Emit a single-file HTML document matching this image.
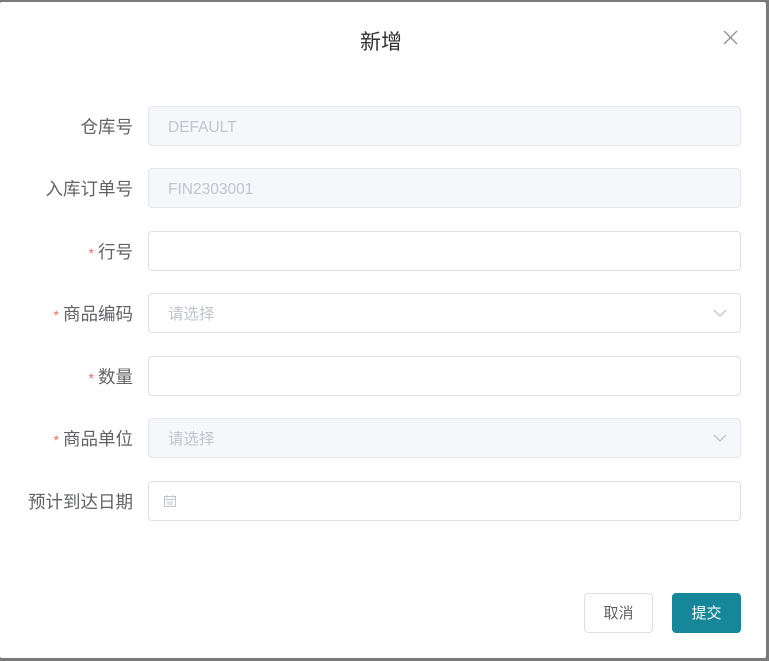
<!DOCTYPE html>
<html><head><meta charset="utf-8"><style>
*{box-sizing:border-box;margin:0;padding:0}
body{width:769px;height:661px;background:#7a7a7a;position:relative;overflow:hidden;font-family:"Liberation Sans","Noto Sans CJK SC",sans-serif}
.dlg{position:absolute;left:0;top:2px;width:766px;height:656px;background:#fff;border-radius:2px}
.title{position:absolute;top:24px;left:-2px;width:766px;text-align:center;font-size:21px;color:#303133}
.close{position:absolute;left:723px;top:28px}
.lab{position:absolute;right:636px;font-size:17.5px;color:#606266;line-height:40px;white-space:nowrap}
.lab i{color:#f56c6c;font-style:normal;margin-right:4px;font-size:14px}
.inp{position:absolute;left:148px;width:593px;height:40px;border:1px solid #dcdfe6;border-radius:4px;font-size:15.5px;color:#c0c4cc;line-height:41px;padding-left:19px}
.dis{background:#f5f7fa;border-color:#e4e7ed}
.arr{position:absolute;right:13px;top:14px}
.btn{position:absolute;top:593px;height:40px;border-radius:4px;font-size:15px;line-height:40px;text-align:center}
</style></head><body>
<div class="dlg">
<div class="title">新增</div>
<svg class="close" width="15" height="15" viewBox="0 0 15 15"><path d="M1 1L14 14M14 1L1 14" stroke="#909399" stroke-width="1.3"/></svg>
</div>
<div class="lab" style="top:107px">仓库号</div>
<div class="inp dis" style="top:106px">DEFAULT</div>
<div class="lab" style="top:169px">入库订单号</div>
<div class="inp dis" style="top:168px">FIN2303001</div>
<div class="lab" style="top:232px"><i>*</i>行号</div>
<div class="inp" style="top:231px"></div>
<div class="lab" style="top:294px"><i>*</i>商品编码</div>
<div class="inp" style="top:293px">请选择<svg class="arr" width="14" height="10" viewBox="0 0 14 10"><path d="M1 2L7 8L13 2" fill="none" stroke="#c0c4cc" stroke-width="1.3"/></svg></div>
<div class="lab" style="top:357px"><i>*</i>数量</div>
<div class="inp" style="top:356px"></div>
<div class="lab" style="top:419px"><i>*</i>商品单位</div>
<div class="inp dis" style="top:418px">请选择<svg class="arr" width="14" height="10" viewBox="0 0 14 10"><path d="M1 2L7 8L13 2" fill="none" stroke="#c0c4cc" stroke-width="1.3"/></svg></div>
<div class="lab" style="top:482px">预计到达日期</div>
<div class="inp" style="top:481px;padding-left:14px"><svg width="14" height="14" viewBox="0 0 14 14" style="position:absolute;top:12px;left:14px"><rect x="1.5" y="2.5" width="11" height="10" fill="none" stroke="#c0c4cc"/><path d="M4 1v3M10 1v3M1.5 5.5h11M4 8h6M4 10h6" stroke="#c0c4cc"/></svg></div>
<div class="btn" style="left:584px;width:69px;border:1px solid #dcdfe6;color:#606266;background:#fff">取消</div>
<div class="btn" style="left:672px;width:69px;background:#168799;color:#fff;border:1px solid #168799">提交</div>
</body></html>
